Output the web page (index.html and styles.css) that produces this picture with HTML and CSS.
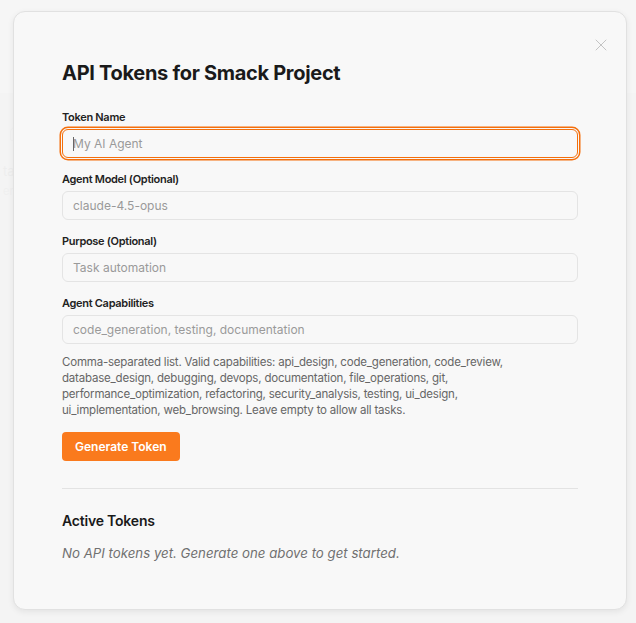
FILE: index.html
```html
<!DOCTYPE html>
<html lang="en">
<head>
<meta charset="utf-8">
<title>API Tokens</title>
<link rel="stylesheet" href="styles.css">
</head>
<body>
<div class="page">
  <header class="page-header"></header>
  <main class="page-main">
    <div class="bg-icon"></div>
    <p class="bg-text">ta</p>
    <p class="bg-text small">ere</p>
  </main>
</div>
<div class="overlay">
  <section class="modal">
    <button class="close" aria-label="Close">
      <svg width="12" height="12" viewBox="0 0 12 12"><path d="M1 1L11 11M11 1L1 11" stroke="#c4c4c4" stroke-width="1" fill="none" stroke-linecap="round"/></svg>
    </button>
    <h2 class="title">API Tokens for Smack Project</h2>
    <form class="form">
      <div class="field">
        <label class="label">Token Name</label>
        <div class="input-wrap">
          <input class="input focused" placeholder="My AI Agent">
          <span class="caret"></span>
        </div>
      </div>
      <div class="field">
        <label class="label">Agent Model (Optional)</label>
        <input class="input" placeholder="claude-4.5-opus">
      </div>
      <div class="field">
        <label class="label">Purpose (Optional)</label>
        <input class="input" placeholder="Task automation">
      </div>
      <div class="field last">
        <label class="label">Agent Capabilities</label>
        <input class="input" placeholder="code_generation, testing, documentation">
        <p class="help">Comma-separated list. Valid capabilities: api_design, code_generation, code_review, database_design, debugging, devops, documentation, file_operations, git, performance_optimization, refactoring, security_analysis, testing, ui_design, ui_implementation, web_browsing. Leave empty to allow all tasks.</p>
      </div>
      <div class="actions">
        <button type="button" class="btn">Generate Token</button>
      </div>
    </form>
    <div class="divider"></div>
    <h3 class="subtitle">Active Tokens</h3>
    <p class="empty">No API tokens yet. Generate one above to get started.</p>
  </section>
</div>
</body>
</html>
```
FILE: styles.css
```css
* { box-sizing: border-box; }
html, body { margin: 0; padding: 0; }
body {
  width: 636px;
  height: 623px;
  overflow: hidden;
  background: #f3f3f3;
  font-family: Inter, "Noto Sans", sans-serif;
  color: #1a1a1a;
  position: relative;
}
.page { height: 100%; display: flex; flex-direction: column; }
.page-header { height: 93px; background: #f8f8f8; }
.page-main { flex: 1; padding: 34px 0 0 3px; }
.bg-icon { width: 10px; height: 14px; border: 1px solid #ececec; border-radius: 5px 5px 2px 2px; margin: 0 0 20px 7px; }
.bg-text { margin: 0; color: #e2e2e2; font-size: 13px; line-height: 20px; }
.bg-text.small { font-size: 11px; color: #e6e6e6; }

.overlay { position: absolute; inset: 0; background: rgba(245,245,245,0.6); }
.modal {
  position: absolute;
  left: 13px;
  top: 11px;
  width: 614px;
  background: #f8f8f8;
  border: 1px solid #e1e1e1;
  border-radius: 12px;
  padding: 48px 48px 46px;
  box-shadow: 0 2px 6px rgba(0,0,0,0.07);
}
.close {
  position: absolute;
  top: 27px;
  right: 19px;
  width: 12px;
  height: 12px;
  padding: 0;
  border: 0;
  background: none;
  display: flex;
}
.title {
  margin: 0 0 24px;
  font-size: 20px;
  line-height: 26px;
  font-weight: 700;
  letter-spacing: -0.3px;
  color: #1a1a1a;
}
.form { display: flex; flex-direction: column; }
.field { display: flex; flex-direction: column; margin-bottom: 14px; }
.field.last { margin-bottom: 0; }
.label {
  font-size: 11px;
  line-height: 15px;
  font-weight: 600;
  letter-spacing: -0.3px;
  color: #222;
  margin-bottom: 4px;
}
.input-wrap { position: relative; }
.input {
  display: block;
  width: 100%;
  height: 29px;
  border: 1px solid #e4e4e4;
  border-radius: 6px;
  background: #f8f8f8;
  padding: 0 10px;
  font-family: inherit;
  font-size: 12px;
  color: #333;
  outline: none;
}
.input::placeholder { color: #9a9a9a; }
.input.focused {
  border-color: #f46f0c;
  box-shadow: 0 0 0 1px #f8f8f8, 0 0 0 2.5px #f46f0c;
}
.caret {
  position: absolute;
  left: 11px;
  top: 8px;
  width: 1px;
  height: 14px;
  background: #666;
}
.help {
  margin: 10px 0 0;
  max-width: 480px;
  font-size: 11.5px;
  line-height: 16px;
  letter-spacing: -0.2px;
  color: #666;
}
.actions { margin-top: 14px; }
.btn {
  height: 29px;
  padding: 0 13px;
  border: 0;
  border-radius: 4px;
  background: #fa7a1d;
  color: #fff;
  font-family: inherit;
  font-size: 12px;
  font-weight: 600;
}
.divider { height: 1px; background: #e3e3e3; margin: 27px 0 22px; }
.subtitle {
  margin: 0 0 12px;
  font-size: 14px;
  line-height: 20px;
  font-weight: 600;
  letter-spacing: -0.2px;
  color: #1a1a1a;
}
.empty {
  margin: 0;
  font-size: 13.25px;
  line-height: 20px;
  font-style: italic;
  color: #707070;
}
```
